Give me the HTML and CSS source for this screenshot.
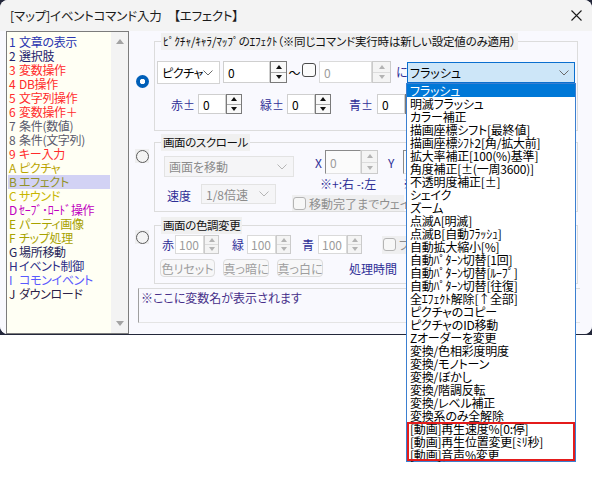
FILE: index.html
```html
<!DOCTYPE html>
<html lang="ja">
<head>
<meta charset="utf-8">
<title>イベントコマンド入力</title>
<link rel="stylesheet" href="styles.css">
</head>
<body>
<div class="screen">
  <div class="window">
    <div class="titlebar">
      <span class="title">[マップ]イベントコマンド入力　【エフェクト】</span>
      <svg class="close" width="11" height="11" viewBox="0 0 11 11"><path d="M0.5 0.5L10.5 10.5M10.5 0.5L0.5 10.5" stroke="#1b1b1b" stroke-width="1.1" fill="none"/></svg>
    </div>
    <div class="body">
      <div class="cmdlist">
        <ul class="items">
          <li class="k-blue"><span class="no">1</span>文章の表示</li>
          <li class="k-navy"><span class="no">2</span>選択肢</li>
          <li class="k-red"><span class="no">3</span>変数操作</li>
          <li class="k-red"><span class="no">4</span>DB操作</li>
          <li class="k-red"><span class="no">5</span>文字列操作</li>
          <li class="k-red"><span class="no">6</span>変数操作＋</li>
          <li class="k-gray"><span class="no">7</span>条件(数値)</li>
          <li class="k-gray"><span class="no">8</span>条件(文字列)</li>
          <li class="k-red"><span class="no">9</span>キー入力</li>
          <li class="k-gold"><span class="no">A</span>ピクチャ</li>
          <li class="k-olive sel"><span class="no">B</span>エフェクト</li>
          <li class="k-gold2"><span class="no">C</span>サウンド</li>
          <li class="k-mag"><span class="no">D</span>ｾｰﾌﾞ･ﾛｰﾄﾞ操作</li>
          <li class="k-olive2"><span class="no">E</span>パーティ画像</li>
          <li class="k-olive2"><span class="no">F</span>チップ処理</li>
          <li class="k-dnavy"><span class="no">G</span>場所移動</li>
          <li class="k-navy2"><span class="no">H</span>イベント制御</li>
          <li class="k-violet"><span class="no">I</span>コモンイベント</li>
          <li class="k-dark"><span class="no">J</span>ダウンロード</li>
        </ul>
        <div class="vscroll"><i class="sarrow up"></i><i class="sarrow down"></i></div>
      </div>

      <div class="main">
        <div class="sec sec1">
          <div class="rcol"><span class="rbox r1"><span class="radio on"></span></span></div>
          <fieldset class="grp">
            <legend class="lg1">ﾋﾟｸﾁｬ/ｷｬﾗ/ﾏｯﾌﾟのｴﾌｪｸﾄ（※同じコマンド実行時は新しい設定値のみ適用）</legend>
            <div class="row r11">
              <span class="combo c-pic">ピクチャ<svg class="chev" width="10" height="6" viewBox="0 0 10 6"><path d="M0.5 0.5L5 5L9.5 0.5" stroke="#6a6a6a" fill="none"/></svg></span>
              <span class="spin s-a"><span class="val">0</span><span class="btns"><i class="up"></i><i class="dn"></i></span></span>
              <span class="tilde">～</span>
              <span class="check c-top"></span>
              <span class="spin s-b dis"><span class="val">0</span><span class="btns"><i class="up"></i><i class="dn"></i></span></span>
              <span class="txt ni">に</span>
              <span class="combo c-eff">フラッシュ<svg class="chev" width="10" height="6" viewBox="0 0 10 6"><path d="M0.5 0.5L5 5L9.5 0.5" stroke="#6a6a6a" fill="none"/></svg>
                <span class="droplist">
                  <span class="opt cur">フラッシュ</span>
                  <span class="opt">明滅フラッシュ</span>
                  <span class="opt">カラー補正</span>
                  <span class="opt">描画座標シフト[最終値]</span>
                  <span class="opt">描画座標ｼﾌﾄ2[角/拡大前]</span>
                  <span class="opt">拡大率補正[100(%)基準]</span>
                  <span class="opt">角度補正[±(一周3600)]</span>
                  <span class="opt">不透明度補正[±]</span>
                  <span class="opt">シェイク</span>
                  <span class="opt">ズーム</span>
                  <span class="opt">点滅A[明滅]</span>
                  <span class="opt">点滅B[自動ﾌﾗｯｼｭ]</span>
                  <span class="opt">自動拡大縮小[%]</span>
                  <span class="opt">自動ﾊﾟﾀｰﾝ切替[1回]</span>
                  <span class="opt">自動ﾊﾟﾀｰﾝ切替[ﾙｰﾌﾟ]</span>
                  <span class="opt">自動ﾊﾟﾀｰﾝ切替[往復]</span>
                  <span class="opt">全ｴﾌｪｸﾄ解除[↑全部]</span>
                  <span class="opt">ピクチャのコピー</span>
                  <span class="opt">ピクチャのID移動</span>
                  <span class="opt">Zオーダーを変更</span>
                  <span class="opt">変換/色相彩度明度</span>
                  <span class="opt">変換/モノトーン</span>
                  <span class="opt">変換/ぼかし</span>
                  <span class="opt">変換/階調反転</span>
                  <span class="opt">変換/レベル補正</span>
                  <span class="opt">変換系のみ全解除</span>
                  <span class="redbox">
                    <span class="opt">[動画]再生速度%[0:停]</span>
                    <span class="opt">[動画]再生位置変更[ﾐﾘ秒]</span>
                    <span class="opt">[動画]音声%変更</span>
                  </span>
                </span>
              </span>
            </div>
            <div class="row r12">
              <span class="txt l-r1">赤±</span>
              <span class="spin s-c"><span class="val">0</span><span class="btns"><i class="up"></i><i class="dn"></i></span></span>
              <span class="txt l-g1">緑±</span>
              <span class="spin s-c"><span class="val">0</span><span class="btns"><i class="up"></i><i class="dn"></i></span></span>
              <span class="txt l-b1">青±</span>
              <span class="spin s-c"><span class="val">0</span><span class="btns"><i class="up"></i><i class="dn"></i></span></span>
            </div>
          </fieldset>
        </div>

        <div class="sec sec2">
          <div class="rcol"><span class="rbox r2"><span class="radio"></span></span></div>
          <fieldset class="grp">
            <legend>画面のスクロール</legend>
            <div class="row r21">
              <span class="combo dis c-move">画面を移動<svg class="chev" width="10" height="6" viewBox="0 0 10 6"><path d="M0.5 0.5L5 5L9.5 0.5" stroke="#b5b5b5" fill="none"/></svg></span>
              <span class="txt l-x">X</span>
              <span class="spin s-x dis inset"><span class="val">0</span><span class="btns"><i class="up"></i><i class="dn"></i></span></span>
              <span class="txt l-y">Y</span>
              <span class="spin s-x dis inset"><span class="val">0</span><span class="btns"><i class="up"></i><i class="dn"></i></span></span>
            </div>
            <div class="row r22">
              <span class="txt l-speed">速度</span>
              <span class="combo dis c-speed">1/8倍速<svg class="chev" width="10" height="6" viewBox="0 0 10 6"><path d="M0.5 0.5L5 5L9.5 0.5" stroke="#b5b5b5" fill="none"/></svg></span>
              <div class="rcolumn">
                <div class="notes"><span class="txt n1">※+:右 -:左</span><span class="txt n2">※+:下 -:上</span></div>
                <div class="chkarea"><span class="check dis"></span><span class="chklbl">移動完了までウェイト</span></div>
              </div>
            </div>
          </fieldset>
        </div>

        <div class="sec sec3">
          <div class="rcol"><span class="rbox r3"><span class="radio"></span></span></div>
          <fieldset class="grp">
            <legend>画面の色調変更</legend>
            <div class="row r31">
              <span class="txt l-r2">赤</span>
              <span class="spin s-t dis"><span class="val">100</span><span class="btns"><i class="up"></i><i class="dn"></i></span></span>
              <span class="txt l-g2">緑</span>
              <span class="spin s-t dis"><span class="val">100</span><span class="btns"><i class="up"></i><i class="dn"></i></span></span>
              <span class="txt l-b2">青</span>
              <span class="spin s-t dis"><span class="val">100</span><span class="btns"><i class="up"></i><i class="dn"></i></span></span>
              <span class="chkarea c-fade"><span class="check dis"></span><span class="chklbl">フラッシュ</span></span>
            </div>
            <div class="row r32">
              <span class="btn b1">色リセット</span>
              <span class="btn b2">真っ暗に</span>
              <span class="btn b2">真っ白に</span>
              <span class="txt l-time">処理時間</span>
            </div>
          </fieldset>
        </div>

        <div class="memo">※ここに変数名が表示されます</div>
      </div>
    </div>
  </div>
</div>
</body>
</html>
```

FILE: styles.css
```css
* { box-sizing: border-box; }
html, body { margin: 0; padding: 0; }
body {
  width: 592px;
  height: 492px;
  overflow: hidden;
  background: #ffffff;
  font-family: "Noto Sans CJK JP", "Noto Sans", sans-serif;
  font-size: 12px;
  font-feature-settings: "palt";
  color: #000;
}
.screen { height: 335px; background: #23273a; }
.window {
  height: 334px;
  border-radius: 8px;
  background: #f9f9fe;
  display: flex;
  flex-direction: column;
}
.titlebar {
  height: 31px;
  flex: none;
  background: #f3f3f3;
  border-radius: 8px 8px 0 0;
  display: flex;
  align-items: center;
  justify-content: space-between;
  padding: 0 10px 0 10px;
}
.title { font-size: 12.5px; color: #1b1b1b; letter-spacing: -0.2px; }

.body {
  flex: 1;
  display: flex;
  border-radius: 0 0 8px 8px;
  background: #f9f9fe;
}

/* left command list */
.cmdlist {
  margin-left: 6px;
  width: 123px;
  height: 303px;
  border: 1px solid #7c7c7c;
  background: #fffff4;
  display: flex;
}
.items {
  list-style: none;
  margin: 0;
  width: 104px;
  padding: 3px 0 0 1px;
}
.items li {
  height: 14px;
  line-height: 14px;
  padding-left: 1px;
  white-space: nowrap;
  font-size: 12px;
  letter-spacing: -0.3px;
  width: 102px;
}
.items li .no { display: inline-block; width: 10px; }
.items li.sel { background: #d2d2f4; }
.k-blue { color: #2a36b0; }
.k-navy { color: #23236e; }
.k-red { color: #ff2b2b; }
.k-gray { color: #5a5a6c; }
.k-gold { color: #baa400; }
.k-olive { color: #92922a; }
.k-gold2 { color: #c8b600; }
.k-mag { color: #c000c0; }
.k-olive2 { color: #a8a200; }
.k-dnavy { color: #25255a; }
.k-navy2 { color: #2c2c86; }
.k-violet { color: #5a5aff; }
.k-dark { color: #2c2146; }

.vscroll {
  width: 17px;
  background: #f3f3f3;
  display: flex;
  flex-direction: column;
  justify-content: space-between;
  align-items: center;
  padding: 7px 0 7px 0;
}
.sarrow { width: 0; height: 0; border-left: 4.5px solid transparent; border-right: 4.5px solid transparent; }
.sarrow.up { border-bottom: 5px solid #a3a3a3; }
.sarrow.down { border-top: 5px solid #a3a3a3; }

/* main */
.main {
  flex: 1;
  display: flex;
  flex-direction: column;
  padding-top: 2px;
}
.sec { display: flex; }
.sec2 { margin-top: 3px; }
.sec3 { margin-top: 5px; }
.rcol { width: 25px; flex: none; }
.rbox {
  display: flex;
  align-items: center;
  justify-content: center;
  width: 14px;
  height: 14px;
  margin-left: 6px;
  background: #efeff0;
}
.r1 { margin-top: 41px; background: transparent; }
.r2 { margin-top: 15px; }
.r3 { margin-top: 13px; }
.radio {
  width: 13px;
  height: 13px;
  border-radius: 50%;
  border: 1px solid #5c5c5c;
  background: #f4f4f4;
}
.radio.on {
  border: none;
  background: radial-gradient(circle, #ffffff 0 2.4px, #005fb8 3px);
}

.grp {
  margin: 0;
  padding: 0;
  min-width: 0;
  width: 424px;
  border: 1px solid #dcdcdc;
}
.grp legend {
  margin-left: 6px;
  padding: 0 2px;
  line-height: 17px;
  height: 17px;
  background: #f0f0f0;
  font-size: 11.5px;
  letter-spacing: -0.4px;
  color: #111;
}
.grp legend.lg1 { font-size: 11.5px; letter-spacing: -0.2px; }
.sec1 .grp { padding-bottom: 16px; }
.sec3 .grp { padding-bottom: 6px; }

.row { display: flex; }
.txt { color: #2e2e96; white-space: nowrap; }

/* combos */
.combo {
  position: relative;
  display: flex;
  align-items: center;
  flex: none;
  border: 1px solid #d3d3d3;
  background: #ffffff;
  padding: 0 6px 0 4px;
  white-space: nowrap;
}
.combo .chev { margin-left: auto; flex: none; }
.combo.dis { background: #f5f5f7; border-color: #e3e3e3; color: #8c8c8c; }
.c-pic { letter-spacing: -0.4px; }

/* spinners */
.spin { display: flex; flex: none; }
.spin .val {
  flex: 1;
  display: flex;
  align-items: center;
  padding-left: 4px;
  background: #ffffff;
  border: 1px solid #cfcfcf;
}
.spin .btns {
  flex: none;
  display: flex;
  flex-direction: column;
  border: 1px solid #7a7a7a;
  background: #f9f9f9;
}
.spin .btns i {
  flex: 1;
  display: flex;
  align-items: center;
  justify-content: center;
}
.spin .btns i.up { border-bottom: 1px solid #a8a8a8; }
.spin .btns i::after { content: ""; width: 0; height: 0; border-left: 3.5px solid transparent; border-right: 3.5px solid transparent; }
.spin .btns i.up::after { border-bottom: 4px solid #111; }
.spin .btns i.dn::after { border-top: 4px solid #111; }
.spin.dis .val { color: #9c9c9c; border-color: #dadada; }
.spin.dis .btns { border-color: #cbcbcb; background: #f4f4f4; }
.spin.dis .btns i.up { border-bottom-color: #dcdcdc; }
.spin.dis .btns i.up::after { border-bottom-color: #b3b3b3; }
.spin.dis .btns i.dn::after { border-top-color: #b3b3b3; }
.spin.inset .val { border-color: #8a8a8a #e2e2e2 #e2e2e2 #8a8a8a; background: #fbfbfb; }

.check {
  flex: none;
  width: 14px;
  height: 14px;
  border: 1px solid #4a4a4a;
  border-radius: 3px;
  background: #fbfbfb;
}
.check.dis { width: 13px; height: 13px; border-color: #b4b4b4; background: #f7f7f7; }

/* section 1 */
.r11 { margin-top: 11px; height: 23px; padding-left: 2px; align-items: flex-start; }
.c-pic { width: 63px; height: 23px; }
.s-a { margin-left: 3px; width: 64px; height: 22px; }
.s-a .btns { width: 17px; }
.tilde { width: 15px; line-height: 23px; text-align: center; }
.c-top { margin-top: 2px; }
.s-b { margin-left: 3px; width: 72px; height: 22px; }
.s-b .btns { width: 19px; }
.ni { margin-left: 5px; width: 11px; line-height: 21px; }
.c-eff {
  width: 168px;
  height: 21px;
  margin-top: 1px;
  background: #cde6f8;
  border-color: #0a6fcf;
  padding-left: 2px;
  padding-right: 5px;
}
.r12 { margin-top: 10px; height: 20px; align-items: center; }
.l-r1 { width: 43px; text-align: right; padding-right: 3px; }
.l-g1 { width: 45px; text-align: right; padding-right: 3px; }
.l-b1 { width: 46px; text-align: right; padding-right: 4px; }
.s-c { width: 44px; height: 20px; }
.s-c .btns { width: 16px; }

/* dropdown */
.droplist {
  position: absolute;
  z-index: 10;
  left: -2px;
  top: 20px;
  width: 170px;
  display: flex;
  flex-direction: column;
  border: 1px solid #3b7fd0;
  background: #ffffff;
  color: #000;
}
.opt {
  display: block;
  height: 13px;
  line-height: 13px;
  padding-left: 3px;
  font-size: 12px;
  letter-spacing: -0.2px;
  white-space: nowrap;
}
.opt.cur { background: #0078d7; color: #ffffff; }
.redbox {
  display: flex;
  flex-direction: column;
  outline: 2px solid #e41b1b;
  outline-offset: -2px;
}

/* section 2 */
.r21 { margin-top: -1px; height: 24px; align-items: flex-start; }
.c-move { margin-left: 9px; margin-top: 6px; width: 130px; height: 21px; }
.l-x { margin-left: 21px; width: 10px; line-height: 26px; }
.s-x { width: 53px; height: 24px; }
.s-x .btns { width: 17px; }
.l-y { width: 25px; padding-left: 10px; line-height: 26px; }
.r22 { height: 37px; align-items: flex-start; }
.l-speed { margin-left: 12px; width: 34px; margin-top: 10px; padding-top: 2px; line-height: 20px; }
.c-speed { margin-top: 10px; width: 75px; height: 20px; }
.rcolumn { margin-left: 16px; display: flex; flex-direction: column; }
.notes { margin-top: 3px; height: 14px; line-height: 14px; display: flex; }
.n1 { margin-left: 28px; width: 83px; }
.chkarea {
  display: flex;
  align-items: center;
  background: #efeff0;
}
.rcolumn .chkarea { margin-top: 4px; height: 16px; width: 112px; }
.chkarea .check { margin-left: 1px; }
.chklbl { margin-left: 3px; color: #8e8e8e; white-space: nowrap; }

/* section 3 */
.r31 { margin-top: 1px; height: 19px; align-items: center; }
.l-r2 { margin-left: 7px; width: 13px; }
.l-g2 { width: 28px; text-align: right; padding-right: 3px; }
.l-b2 { width: 27px; text-align: right; padding-right: 4px; }
.s-t { width: 44px; height: 19px; }
.s-t .btns { width: 15px; }
.s-t .val { padding-left: 3px; }
.c-fade { margin-left: 20px; height: 18px; width: 60px; }
.r32 { margin-top: 5px; height: 18px; align-items: center; }
.btn {
  height: 18px;
  display: flex;
  align-items: center;
  justify-content: center;
  border: 1px solid #dcdcdc;
  border-radius: 4px;
  background: #f7f7f8;
  color: #9e9e9e;
  white-space: nowrap;
}
.b1 { margin-left: 5px; width: 55px; }
.b2 { margin-left: 8px; width: 46px; }
.l-time { margin-left: 26px; }

/* memo */
.memo {
  margin-top: 4px;
  margin-left: 9px;
  width: 442px;
  height: 35px;
  border-left: 1px solid #a0a0a0;
  border-top: 1px solid #dcdcdc;
  border-bottom: 1px solid #e4e4e4;
  background: #f9f9fe;
  padding: 1px 0 0 2px;
  color: #47308a;
  line-height: 16px;
}
```
